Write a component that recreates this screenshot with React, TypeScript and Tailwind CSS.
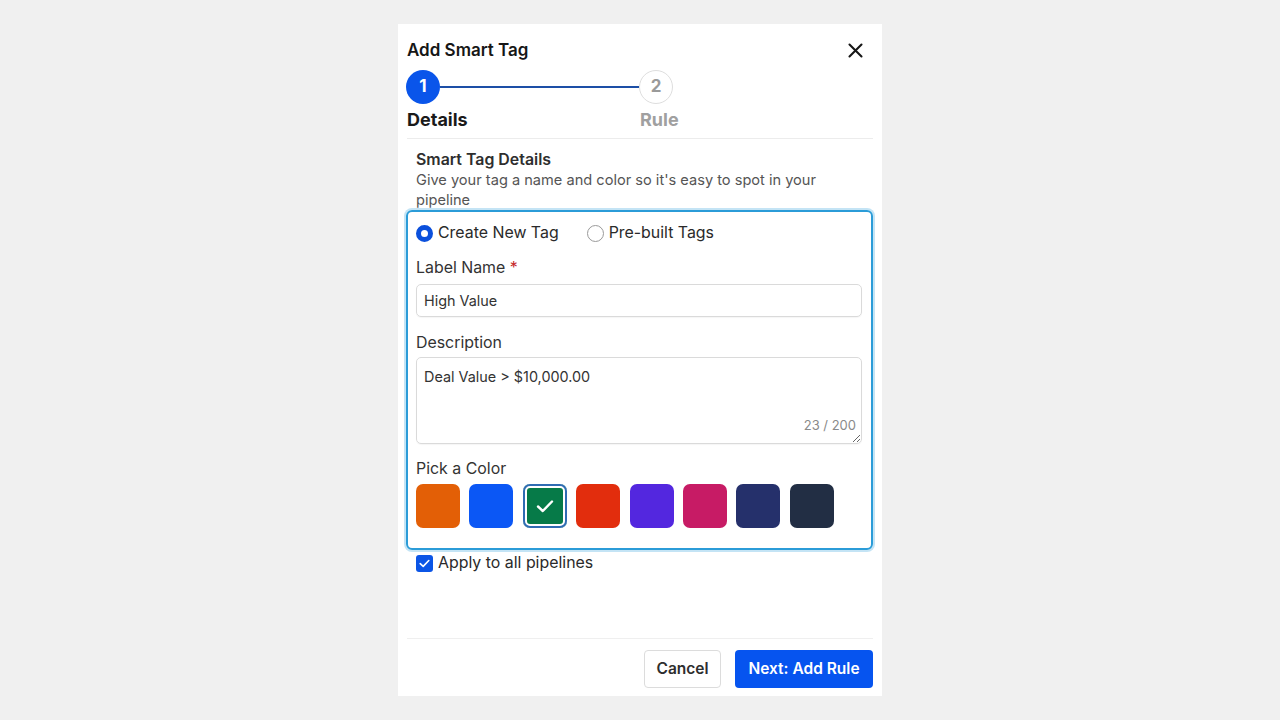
import { useState } from "react";

const swatches = [
  "#e35f06",
  "#0b57f5",
  "#067a48",
  "#e22d0d",
  "#5327df",
  "#c71b65",
  "#25306b",
  "#222e44",
];

export default function App() {
  const [selected, setSelected] = useState(2);
  const [mode, setMode] = useState<"new" | "prebuilt">("new");
  const [applyAll, setApplyAll] = useState(true);

  return (
    <div
      className="min-h-screen bg-[#f0f0f0] flex justify-center pt-[24px]"
      style={{ fontFamily: "Inter, 'Noto Sans', sans-serif" }}
    >
      <div className="w-[484px] h-[672px] bg-white flex flex-col pl-[8px] pr-[9px] pt-[14px] pb-[8px]">
        {/* Header */}
        <div className="flex items-center justify-between pl-px">
          <h2 className="text-[17px] leading-[24px] font-semibold text-[#161616]">
            Add Smart Tag
          </h2>
          <button className="w-[20px] h-[20px] flex items-center justify-center mr-[8px]">
            <svg width="15" height="15" viewBox="0 0 15 15">
              <path
                d="M1.5 1.5 L13.5 13.5 M13.5 1.5 L1.5 13.5"
                stroke="#161616"
                strokeWidth="2.1"
                strokeLinecap="round"
              />
            </svg>
          </button>
        </div>

        {/* Stepper */}
        <div className="flex mt-[8px]">
          <div className="w-[233px] flex flex-col">
            <div className="flex items-center">
              <div className="w-[34px] h-[34px] rounded-full bg-[#0a55ea] flex items-center justify-center text-white text-[17px] font-bold">
                1
              </div>
              <div className="flex-1 h-[2px] bg-[#1d4fa6]" />
            </div>
            <div className="mt-[4px] text-[18px] leading-[24px] font-bold text-[#1a1a1a] pl-px">
              Details
            </div>
          </div>
          <div className="flex flex-col">
            <div className="w-[34px] h-[34px] rounded-full border border-[#dedede] flex items-center justify-center text-[#9a9a9a] text-[17px] font-bold">
              2
            </div>
            <div className="mt-[4px] text-[18px] leading-[24px] font-bold text-[#a0a0a0] pl-px">
              Rule
            </div>
          </div>
        </div>

        <div className="mt-[6px] h-px bg-[#ececec] ml-px" />

        {/* Section intro */}
        <div className="pl-[10px] pt-[11px]">
          <div className="text-[15.9px] leading-[20px] font-semibold text-[#2e2e2e]">
            Smart Tag Details
          </div>
          <p className="text-[14.6px] leading-[20px] text-[#555] pr-[30px]">
            Give your tag a name and color so it's easy to spot in your
            pipeline
          </p>
        </div>

        {/* Fieldset */}
        <div className="border-2 border-[#2b9cd8] rounded-[6px] shadow-[0_0_0_2px_#c4e4f5] pl-[8px] pr-[9px] pt-[11px] pb-[20px]">
          <div className="flex items-center gap-[28px] h-[20px]">
            <label
              className="flex items-center gap-[5px] cursor-pointer"
              onClick={() => setMode("new")}
            >
              <span
                className={
                  mode === "new"
                    ? "w-[17px] h-[17px] rounded-full border-[5px] border-[#0b50dc] bg-white"
                    : "w-[17px] h-[17px] rounded-full border border-[#9a9a9a] bg-white"
                }
              />
              <span className="text-[15.9px] text-[#2a2a2a]">Create New Tag</span>
            </label>
            <label
              className="flex items-center gap-[5px] cursor-pointer"
              onClick={() => setMode("prebuilt")}
            >
              <span
                className={
                  mode === "prebuilt"
                    ? "w-[17px] h-[17px] rounded-full border-[5px] border-[#0b50dc] bg-white"
                    : "w-[17px] h-[17px] rounded-full border border-[#9a9a9a] bg-white"
                }
              />
              <span className="text-[15.9px] text-[#2a2a2a]">Pre-built Tags</span>
            </label>
          </div>

          <div className="mt-[15px] text-[15.9px] leading-[20px] text-[#333]">
            Label Name <span className="text-[#c62828]">*</span>
          </div>
          <input
            className="block mt-[6px] w-full h-[33px] rounded-[5px] border border-[#dadada] shadow-[0_1px_1px_rgba(0,0,0,0.04)] px-[7px] text-[14.4px] text-[#333] outline-none"
            defaultValue="High Value"
          />

          <div className="mt-[16px] text-[15.9px] leading-[20px] text-[#333]">
            Description
          </div>
          <div className="relative mt-[4px]">
            <textarea
              className="block w-full h-[87px] rounded-[5px] border border-[#dadada] shadow-[0_1px_1px_rgba(0,0,0,0.04)] px-[7px] pt-[9px] text-[14.4px] leading-[20px] text-[#333] outline-none"
              defaultValue="Deal Value > $10,000.00"
            />
            <span className="absolute right-[6px] bottom-[9px] text-[13px] text-[#8a8a8a]">
              23 / 200
            </span>
          </div>

          <div className="mt-[15px] text-[15.9px] leading-[20px] text-[#333]">
            Pick a Color
          </div>
          <div className="mt-[5px] flex gap-[9.4px]">
            {swatches.map((c, i) => (
              <button
                key={c}
                onClick={() => setSelected(i)}
                className={
                  i === selected
                    ? "w-[44px] h-[44px] rounded-[7px] flex items-center justify-center shadow-[inset_0_0_0_2px_#2f6cb3,inset_0_0_0_4px_#ffffff]"
                    : "w-[44px] h-[44px] rounded-[7px]"
                }
                style={{ backgroundColor: c }}
              >
                {i === selected && (
                  <svg width="18" height="14" viewBox="0 0 18 14">
                    <path
                      d="M2 7.5 L6.8 12 L16 2.5"
                      stroke="white"
                      strokeWidth="2.4"
                      fill="none"
                      strokeLinecap="round"
                      strokeLinejoin="round"
                    />
                  </svg>
                )}
              </button>
            ))}
          </div>
        </div>

        {/* Apply checkbox */}
        <label
          className="mt-[3px] ml-[10px] flex items-center gap-[5px] h-[20px] cursor-pointer"
          onClick={() => setApplyAll(!applyAll)}
        >
          <span
            className={
              applyAll
                ? "w-[17px] h-[17px] rounded-[3px] bg-[#0b55e6] flex items-center justify-center"
                : "w-[17px] h-[17px] rounded-[3px] border border-[#9a9a9a]"
            }
          >
            {applyAll && (
              <svg width="11" height="9" viewBox="0 0 11 9">
                <path
                  d="M1.2 4.6 L4.2 7.4 L9.8 1.5"
                  stroke="white"
                  strokeWidth="1.6"
                  fill="none"
                  strokeLinecap="round"
                  strokeLinejoin="round"
                />
              </svg>
            )}
          </span>
          <span className="text-[15.9px] text-[#2a2a2a]">Apply to all pipelines</span>
        </label>

        <div className="flex-1" />

        {/* Footer */}
        <div className="h-px bg-[#efefef] ml-px" />
        <div className="flex justify-end gap-[14px] pt-[11px]">
          <button className="w-[77px] h-[38px] rounded-[4px] border border-[#dcdcdc] bg-white text-[15.5px] font-semibold text-[#2e2e2e]">
            Cancel
          </button>
          <button className="w-[138px] h-[38px] rounded-[4px] bg-[#0654ef] text-[15.5px] font-semibold text-white">
            Next: Add Rule
          </button>
        </div>
      </div>
    </div>
  );
}
